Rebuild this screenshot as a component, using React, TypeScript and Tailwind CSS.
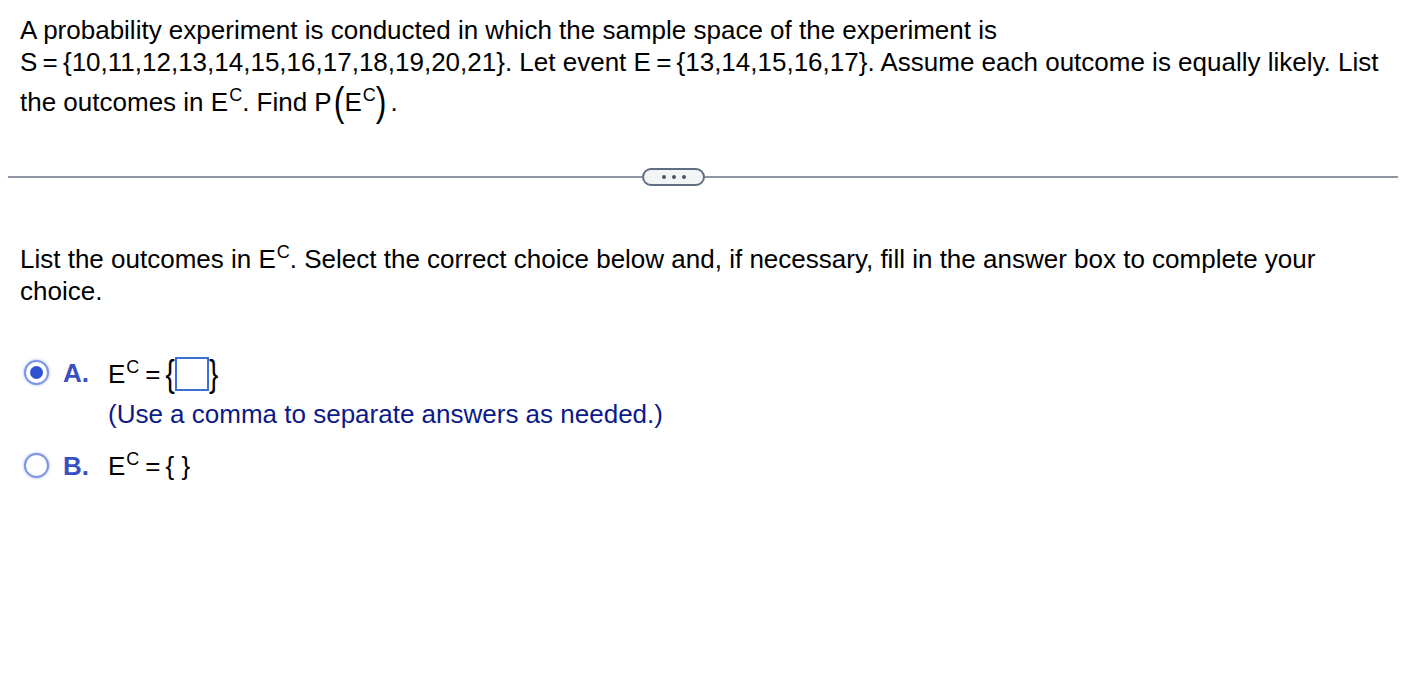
import React from "react";

const T = "\u2009";

function Ec() {
  return (
    <span className="whitespace-nowrap">
      E<span className="relative -top-[10px] ml-[1px] inline-block text-[18px] leading-none">C</span>
    </span>
  );
}

function Radio({ checked }: { checked?: boolean }) {
  return (
    <span className="flex h-[25px] w-[25px] items-center justify-center rounded-full border-[2.5px] border-[#7d96e4] bg-white shadow-[0_0_3px_rgba(70,110,220,0.55)]">
      {checked && <span className="h-[13px] w-[13px] rounded-full bg-[#2f52d0]" />}
    </span>
  );
}

export default function App() {
  return (
    <div className="min-h-screen bg-white font-['Liberation_Sans',Arial,sans-serif] text-[26px] text-black">
      <div className="px-5 pt-[14px] leading-[32px]">
        <div className="whitespace-nowrap">
          A probability experiment is conducted in which the sample space of the experiment is
        </div>
        <div className="whitespace-nowrap">
          S{T}={T}
          {"{"}10,11,12,13,14,15,16,17,18,19,20,21{"}"}. Let event E{T}={T}
          {"{"}13,14,15,16,17{"}"}. Assume each outcome is equally likely. List
        </div>
        <div className="mt-[8px] flex h-[32px] items-center whitespace-nowrap">
          <span>
            the outcomes in <Ec />. Find P
          </span>
          <span className="ml-[2px] inline-flex items-center">
            <span className="inline-block scale-y-[1.25] text-[32px] font-light leading-none">(</span>
            <Ec />
            <span className="inline-block scale-y-[1.25] text-[32px] font-light leading-none">)</span>
          </span>
          <span className="ml-[4px]">.</span>
        </div>
      </div>

      <div className="mt-[50px] flex items-center px-2">
        <div className="h-[2px] w-[634px] bg-[#8d96a2]" />
        <div className="flex h-[18px] w-[63px] items-center justify-center gap-[6px] rounded-full border-2 border-[#5f6e80] bg-[#f3f4f6]">
          <span className="h-[4px] w-[4px] rounded-full bg-[#4b5563]" />
          <span className="h-[4px] w-[4px] rounded-full bg-[#4b5563]" />
          <span className="h-[4px] w-[4px] rounded-full bg-[#4b5563]" />
        </div>
        <div className="h-[2px] flex-1 bg-[#8d96a2]" />
      </div>

      <div className="px-5 pt-[57px] leading-[32px]">
        <div className="whitespace-nowrap">
          List the outcomes in <Ec />. Select the correct choice below and, if necessary, fill in the answer box to
          complete your
        </div>
        <div>choice.</div>
      </div>

      <div className="mt-[50px] flex flex-col pl-[24px] leading-[32px]">
        <div className="flex items-start">
          <div className="mt-[3px]">
            <Radio checked />
          </div>
          <span className="ml-[14px] font-bold text-[#3a4fc2]">A.</span>
          <div className="ml-[19px] flex flex-col">
            <div className="flex h-[34px] items-center">
              <Ec />
              <span className="ml-[6px] mr-[5px]">=</span>
              <span className="flex items-center">
                <span className="inline-block scale-y-[1.35] text-[28px] font-light leading-none">{"{"}</span>
                <span className="h-[34px] w-[34px] border-2 border-[#3b6fd1] bg-white" />
                <span className="inline-block scale-y-[1.35] text-[28px] font-light leading-none">{"}"}</span>
              </span>
            </div>
            <span className="mt-[7px] whitespace-nowrap text-[#0b1a8a]">(Use a comma to separate answers as needed.)</span>
          </div>
        </div>
        <div className="mt-[20px] flex items-start">
          <div className="mt-[3px]">
            <Radio />
          </div>
          <span className="ml-[14px] font-bold text-[#3a4fc2]">B.</span>
          <div className="ml-[19px] flex items-center">
            <Ec />
            <span className="ml-[6px] mr-[5px]">=</span>
            <span>{"{ }"}</span>
          </div>
        </div>
      </div>
    </div>
  );
}
